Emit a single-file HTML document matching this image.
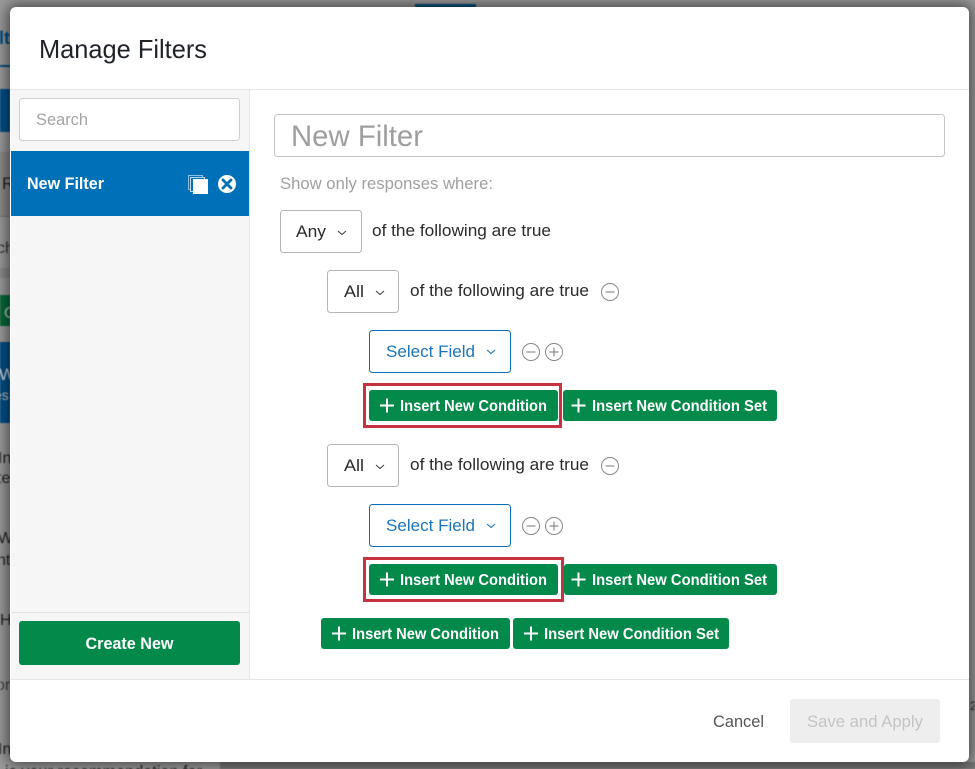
<!DOCTYPE html>
<html><head><meta charset="utf-8"><title>Manage Filters</title>
<style>
html,body{margin:0;padding:0;width:975px;height:769px;overflow:hidden;background:#9c9c9c}
svg{position:absolute;left:0;top:0}
text{font-family:"Liberation Sans",sans-serif;white-space:pre}
#modal{position:absolute;left:10px;top:7px;width:959px;height:755px;background:#fff;border-radius:6px;box-shadow:0 0 14px 3px rgba(0,0,0,.55)}
#top{filter:blur(.3px)}
.w{fill:#fff;font-weight:bold}
.d{fill:#2b2b2b}
</style></head><body>
<svg width="975" height="769" viewBox="0 0 975 769" style="filter:blur(.6px)">
<rect x="415" y="4" width="61" height="4" fill="#004f85"/>
<rect x="0" y="65" width="10" height="2" fill="#00508a"/>
<rect x="0" y="89" width="10" height="43" fill="#00508a"/>
<rect x="0" y="152" width="10" height="64" fill="#8c8c8c"/>
<rect x="0" y="216" width="10" height="1" fill="#777"/>
<rect x="0" y="268" width="10" height="10" fill="#8c8c8c"/>
<rect x="0" y="295" width="10" height="31" fill="#056a38"/>
<rect x="0" y="342" width="10" height="81" fill="#00508a"/>
<text x="-1" y="44" font-size="18" font-weight="bold" fill="#004f85">lt</text>
<text x="2" y="189" font-size="17" fill="#222">R</text>
<text x="-3" y="253" font-size="16" fill="#333">ch</text>
<text x="4" y="318" font-size="16" fill="#ccc">C</text>
<text x="-1" y="380" font-size="17" fill="#ddd">W</text>
<text x="-6" y="400" font-size="14" fill="#ccc">es</text>
<text x="-2" y="463" font-size="16" fill="#222">In</text>
<text x="-3" y="483" font-size="16" fill="#222">te</text>
<text x="-2" y="543" font-size="16" fill="#222">W</text>
<text x="-3" y="565" font-size="16" fill="#222">nt</text>
<text x="0" y="625" font-size="16" fill="#222">H</text>
<text x="-4" y="690" font-size="16" fill="#444">or</text>
<text x="-2" y="754" font-size="16" fill="#222">In</text>
<text x="5" y="777" font-size="17" fill="#222" textLength="197" lengthAdjust="spacingAndGlyphs">is your recommendation for</text>
<rect x="220" y="762" width="755" height="7" fill="#777"/>
<text x="970" y="710" font-size="12" fill="#222">22</text>
</svg>
<div id="modal"></div>
<svg id="top" width="975" height="769" viewBox="0 0 975 769">
<text x="39" y="58" font-size="26" fill="#1f2328" textLength="168" lengthAdjust="spacingAndGlyphs">Manage Filters</text>
<rect x="10" y="89" width="959" height="1" fill="#e6e6e6"/>
<rect x="11" y="90" width="238" height="589" fill="#f6f6f6"/>
<rect x="249" y="90" width="1" height="589" fill="#e8e8e8"/>
<rect x="10" y="679" width="959" height="1" fill="#e6e6e6"/>
<rect x="19.500" y="98.500" width="220" height="42" rx="3" fill="#fff" stroke="#cfcfcf"/>
<text x="36" y="125" font-size="17" fill="#a3a3a3" textLength="52" lengthAdjust="spacingAndGlyphs">Search</text>
<rect x="11" y="151" width="238" height="65" fill="#0070b8"/>
<text x="27" y="189" font-size="17" class="w" textLength="77" lengthAdjust="spacingAndGlyphs">New Filter</text>
<rect x="188.500" y="175.500" width="14" height="14" fill="none" stroke="#8fc0e2"/>
<rect x="190.500" y="177.500" width="14" height="14" fill="#0070b8" stroke="#bcdaee"/>
<rect x="193" y="179" width="15" height="15" fill="#fff"/>
<circle cx="227" cy="184" r="9" fill="#fff"/>
<path d="M223 180l8 8M231 180l-8 8" stroke="#0070b8" stroke-width="2.800" stroke-linecap="round"/>
<rect x="11" y="612" width="238" height="1" fill="#e3e3e3"/>
<rect x="19" y="621" width="221" height="44" rx="3" fill="#038a4a"/>
<text x="85.500" y="649" font-size="17" class="w" textLength="88" lengthAdjust="spacingAndGlyphs">Create New</text>

<rect x="274.500" y="114.500" width="670" height="42" rx="3" fill="#fff" stroke="#c4c4c4"/>
<text x="291" y="146" font-size="30" fill="#9e9e9e" textLength="132" lengthAdjust="spacingAndGlyphs">New Filter</text>
<text x="280" y="189" font-size="16.500" fill="#a0a0a0" textLength="213" lengthAdjust="spacingAndGlyphs">Show only responses where:</text>

<rect x="280.500" y="210.500" width="81" height="42" rx="3" fill="#fff" stroke="#b5b5b5"/>
<text x="296" y="237" font-size="17" class="d" textLength="30" lengthAdjust="spacingAndGlyphs">Any</text>
<path d="M338 231l4 3.500 4-3.500" fill="none" stroke="#444" stroke-width="1.100"/>
<text x="372" y="236" font-size="17" class="d" textLength="179" lengthAdjust="spacingAndGlyphs">of the following are true</text>

<rect x="327.500" y="270.500" width="71" height="42" rx="3" fill="#fff" stroke="#b5b5b5"/>
<text x="344" y="297" font-size="17" class="d" textLength="20" lengthAdjust="spacingAndGlyphs">All</text>
<path d="M376 291l4 3.500 4-3.500" fill="none" stroke="#444" stroke-width="1.100"/>
<text x="410" y="296" font-size="17" class="d" textLength="179" lengthAdjust="spacingAndGlyphs">of the following are true</text>
<circle cx="610" cy="292" r="8.500" fill="#fff" stroke="#888" stroke-width="1"/>
<path d="M605.500 292h9" stroke="#777" stroke-width="1"/>

<rect x="369.500" y="330.500" width="141" height="42" rx="3" fill="#fff" stroke="#0b6ebd"/>
<text x="386" y="357" font-size="17" fill="#1b74bb" textLength="89" lengthAdjust="spacingAndGlyphs">Select Field</text>
<path d="M487 350l4 3.500 4-3.500" fill="none" stroke="#1b74bb" stroke-width="1.100"/>
<circle cx="531" cy="352" r="8.500" fill="#fff" stroke="#888" stroke-width="1"/>
<path d="M526.500 352h9" stroke="#777" stroke-width="1"/>
<circle cx="554" cy="352" r="8.500" fill="#fff" stroke="#888" stroke-width="1"/>
<path d="M549.500 352h9M554 347.500v9" stroke="#777" stroke-width="1"/>

<rect x="364.500" y="384.500" width="196" height="42" fill="#fff" stroke="#c8323f" stroke-width="3"/>
<rect x="369" y="390" width="189" height="31" rx="3" fill="#038a4a"/>
<path d="M387 398.500v14M380 405.500h14" stroke="#fff" stroke-width="2"/>
<text x="400" y="411" font-size="15.500" class="w" textLength="147" lengthAdjust="spacingAndGlyphs">Insert New Condition</text>
<rect x="563" y="390" width="214" height="31" rx="3" fill="#038a4a"/>
<path d="M578.500 398.500v14M571.500 405.500h14" stroke="#fff" stroke-width="2"/>
<text x="592" y="411" font-size="15.500" class="w" textLength="175" lengthAdjust="spacingAndGlyphs">Insert New Condition Set</text>

<rect x="327.500" y="444.500" width="71" height="42" rx="3" fill="#fff" stroke="#b5b5b5"/>
<text x="344" y="471" font-size="17" class="d" textLength="20" lengthAdjust="spacingAndGlyphs">All</text>
<path d="M376 465l4 3.500 4-3.500" fill="none" stroke="#444" stroke-width="1.100"/>
<text x="410" y="470" font-size="17" class="d" textLength="179" lengthAdjust="spacingAndGlyphs">of the following are true</text>
<circle cx="610" cy="466" r="8.500" fill="#fff" stroke="#888" stroke-width="1"/>
<path d="M605.500 466h9" stroke="#777" stroke-width="1"/>

<rect x="369.500" y="504.500" width="141" height="42" rx="3" fill="#fff" stroke="#0b6ebd"/>
<text x="386" y="531" font-size="17" fill="#1b74bb" textLength="89" lengthAdjust="spacingAndGlyphs">Select Field</text>
<path d="M487 524l4 3.500 4-3.500" fill="none" stroke="#1b74bb" stroke-width="1.100"/>
<circle cx="531" cy="526" r="8.500" fill="#fff" stroke="#888" stroke-width="1"/>
<path d="M526.500 526h9" stroke="#777" stroke-width="1"/>
<circle cx="554" cy="526" r="8.500" fill="#fff" stroke="#888" stroke-width="1"/>
<path d="M549.500 526h9M554 521.500v9" stroke="#777" stroke-width="1"/>

<rect x="364.500" y="558.500" width="198" height="42" fill="#fff" stroke="#c8323f" stroke-width="3"/>
<rect x="369" y="564" width="189" height="31" rx="3" fill="#038a4a"/>
<path d="M387 572.500v14M380 579.500h14" stroke="#fff" stroke-width="2"/>
<text x="400" y="585" font-size="15.500" class="w" textLength="147" lengthAdjust="spacingAndGlyphs">Insert New Condition</text>
<rect x="564" y="564" width="213" height="31" rx="3" fill="#038a4a"/>
<path d="M578.500 572.500v14M571.500 579.500h14" stroke="#fff" stroke-width="2"/>
<text x="592" y="585" font-size="15.500" class="w" textLength="175" lengthAdjust="spacingAndGlyphs">Insert New Condition Set</text>

<rect x="321" y="618" width="189" height="31" rx="3" fill="#038a4a"/>
<path d="M339 626.500v14M332 633.500h14" stroke="#fff" stroke-width="2"/>
<text x="352" y="639" font-size="15.500" class="w" textLength="147" lengthAdjust="spacingAndGlyphs">Insert New Condition</text>
<rect x="513" y="618" width="216" height="31" rx="3" fill="#038a4a"/>
<path d="M531 626.500v14M524 633.500h14" stroke="#fff" stroke-width="2"/>
<text x="544" y="639" font-size="15.500" class="w" textLength="175" lengthAdjust="spacingAndGlyphs">Insert New Condition Set</text>

<text x="713" y="727" font-size="17" fill="#555" textLength="51" lengthAdjust="spacingAndGlyphs">Cancel</text>
<rect x="790" y="699" width="150" height="44" rx="3" fill="#eeeeee"/>
<text x="807" y="727" font-size="17" fill="#c4c4c4" textLength="116" lengthAdjust="spacingAndGlyphs">Save and Apply</text>
</svg>
</body></html>
